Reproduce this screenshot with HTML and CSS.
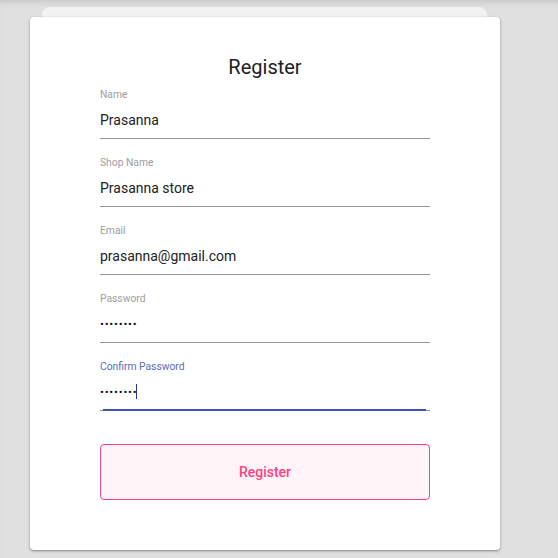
FILE: index.html
```html
<!DOCTYPE html>
<html>
<head>
<meta charset="utf-8">
<link rel="stylesheet" href="styles.css">
</head>
<body>
<div class="page">
  <div class="back-card"></div>
  <div class="card">
    <h1 class="title">Register</h1>
    <div class="field">
      <div class="label">Name</div>
      <div class="value">Prasanna</div>
    </div>
    <div class="field">
      <div class="label">Shop Name</div>
      <div class="value">Prasanna store</div>
    </div>
    <div class="field">
      <div class="label">Email</div>
      <div class="value">prasanna@gmail.com</div>
    </div>
    <div class="field">
      <div class="label">Password</div>
      <div class="value dots">••••••••</div>
    </div>
    <div class="field focused">
      <div class="label">Confirm Password</div>
      <div class="value dots">••••••••<span class="caret"></span></div>
    </div>
    <button class="btn">Register</button>
  </div>
</div>
</body>
</html>
```
FILE: styles.css
```css
html, body {
  margin: 0;
  padding: 0;
}
body {
  background: #e0e0e0;
  font-family: Roboto, "Liberation Sans", sans-serif;
  height: 558px;
  overflow: hidden;
  box-shadow: inset 0 6px 6px -4px rgba(0,0,0,0.12);
}
.page {
  padding-top: 7px;
}
.back-card {
  margin-left: 42px;
  width: 445px;
  height: 10px;
  background: #f2f2f2;
  border-radius: 8px 8px 0 0;
}
.card {
  margin-left: 30px;
  width: 470px;
  height: 533px;
  box-sizing: border-box;
  background: #fff;
  border-radius: 4px;
  box-shadow: 0 1px 3px rgba(0,0,0,0.35), 0 1px 1px rgba(0,0,0,0.1);
  padding: 38px 70px 0;
}
.title {
  margin: 0 0 10px;
  font-size: 20px;
  font-weight: 400;
  line-height: 24px;
  text-align: center;
  color: #212121;
}
.field {
  position: relative;
  border-bottom: 1px solid #949494;
  margin-bottom: 18px;
}
.label {
  font-size: 10.3px;
  line-height: 12px;
  color: #9e9e9e;
}
.value {
  margin-top: 9px;
  padding-bottom: 8px;
  font-size: 14px;
  line-height: 20px;
  color: #212121;
}
.dots {
  font-size: 11.5px;
  letter-spacing: 0.8px;
  color: #111;
}
.focused .label {
  color: #5c6bc0;
}
.focused::after {
  content: "";
  position: absolute;
  left: 3px;
  right: 4px;
  bottom: -1px;
  height: 2px;
  background: #3f51b5;
}
.caret {
  display: inline-block;
  width: 1px;
  height: 15px;
  margin-left: -1px;
  background: #283593;
  vertical-align: -3px;
}
.btn {
  display: block;
  margin-top: 33px;
  width: 330px;
  height: 56px;
  box-sizing: border-box;
  border: 1px solid #ff4081;
  border-radius: 4px;
  background: #fff5f8;
  color: #ff4081;
  font-family: Roboto, "Liberation Sans", sans-serif;
  font-size: 14px;
  font-weight: 500;
  padding: 0;
}
```
